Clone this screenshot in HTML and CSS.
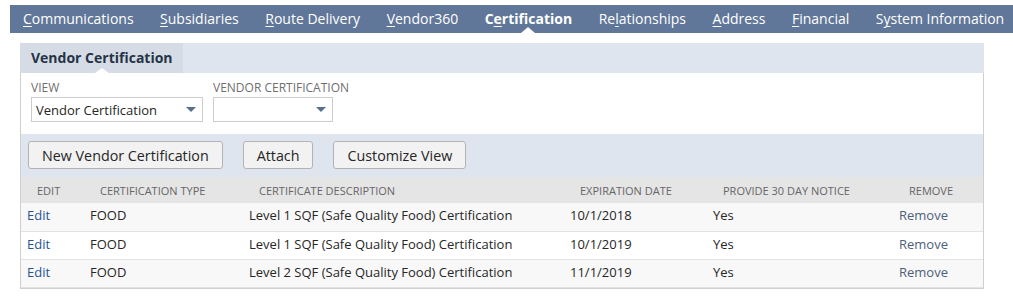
FILE: index.html
```html
<!DOCTYPE html>
<html>
<head>
<meta charset="utf-8">
<link rel="stylesheet" href="styles.css">
</head>
<body>
<nav class="tabs">
  <span class="tab"><u>C</u>ommunications</span>
  <span class="tab"><u>S</u>ubsidiaries</span>
  <span class="tab"><u>R</u>oute Delivery</span>
  <span class="tab"><u>V</u>endor360</span>
  <span class="tab active">C<u>e</u>rtification</span>
  <span class="tab">Re<u>l</u>ationships</span>
  <span class="tab"><u>A</u>ddress</span>
  <span class="tab"><u>F</u>inancial</span>
  <span class="tab">S<u>y</u>stem Information</span>
</nav>
<section class="panel">
  <header class="panel-head">
    <div class="panel-tab">Vendor Certification</div>
  </header>
  <div class="panel-body">
    <div class="filters">
      <div class="field">
        <div class="label">View</div>
        <div class="select wide"><span>Vendor Certification</span><i class="caret"></i></div>
      </div>
      <div class="field">
        <div class="label">Vendor Certification</div>
        <div class="select narrow"><span></span><i class="caret"></i></div>
      </div>
    </div>
    <div class="buttons">
      <button class="btn">New Vendor Certification</button>
      <button class="btn">Attach</button>
      <button class="btn">Customize View</button>
    </div>
    <table class="list">
      <colgroup>
        <col class="c1"><col class="c2"><col class="c3"><col class="c4"><col class="c5"><col class="c6">
      </colgroup>
      <thead>
        <tr><th>Edit</th><th>Certification Type</th><th>Certificate Description</th><th>Expiration Date</th><th>Provide 30 Day Notice</th><th>Remove</th></tr>
      </thead>
      <tbody>
        <tr><td><a class="edit">Edit</a></td><td>FOOD</td><td>Level 1 SQF (Safe Quality Food) Certification</td><td>10/1/2018</td><td>Yes</td><td><a class="remove">Remove</a></td></tr>
        <tr><td><a class="edit">Edit</a></td><td>FOOD</td><td>Level 1 SQF (Safe Quality Food) Certification</td><td>10/1/2019</td><td>Yes</td><td><a class="remove">Remove</a></td></tr>
        <tr><td><a class="edit">Edit</a></td><td>FOOD</td><td>Level 2 SQF (Safe Quality Food) Certification</td><td>11/1/2019</td><td>Yes</td><td><a class="remove">Remove</a></td></tr>
      </tbody>
    </table>
  </div>
</section>
</body>
</html>
```
FILE: styles.css
```css
* { box-sizing: border-box; }
body {
  margin: 0;
  background: #fff;
  font-family: "Open Sans", "Noto Sans", sans-serif;
  color: #262626;
}
.tabs {
  margin: 5px 0 0 10px;
  height: 28px;
  background: #607799;
  display: flex;
  align-items: center;
}
.tab {
  position: relative;
  padding: 0 13.25px;
  font-size: 14px;
  line-height: 28px;
  color: #fff;
  white-space: nowrap;
}
.tab:first-child { padding-left: 13px; }
.tab u { text-decoration-thickness: 1px; text-underline-offset: 2px; }
.tab.active { font-weight: 700; }
.tab.active::after {
  content: "";
  position: absolute;
  left: 50%;
  bottom: 0;
  margin-left: -7px;
  border-left: 7px solid transparent;
  border-right: 7px solid transparent;
  border-bottom: 6px solid #fff;
}
.panel {
  margin: 10px 29px 0 20px;
}
.panel-head {
  height: 30px;
  background: #dfe5ee;
}
.panel-tab {
  position: relative;
  width: 163px;
  height: 30px;
  background: #d6dce5;
  padding-left: 11px;
  font-size: 14px;
  font-weight: 700;
  line-height: 30px;
  color: #253447;
}
.panel-tab::after {
  content: "";
  position: absolute;
  left: 50%;
  bottom: 0;
  margin-left: -7px;
  border-left: 7px solid transparent;
  border-right: 7px solid transparent;
  border-bottom: 5px solid #fff;
}
.panel-body {
  border-left: 1px solid #cfcfcf;
  border-right: 1px solid #cfcfcf;
  border-bottom: 1px solid #cfcfcf;
}
.filters {
  display: flex;
  gap: 10px;
  padding: 7px 10px 12px 10px;
}
.label {
  font-size: 12px;
  line-height: 16px;
  color: #6f6f6f;
  text-transform: uppercase;
  margin-bottom: 1px;
}
.select {
  height: 25px;
  border: 1px solid #cccccc;
  display: flex;
  align-items: center;
  justify-content: space-between;
  padding: 0 6px 0 4px;
  font-size: 13px;
  color: #262626;
}
.select.wide { width: 172px; }
.select.narrow { width: 120px; }
.caret {
  width: 0;
  height: 0;
  border-left: 5.5px solid transparent;
  border-right: 5.5px solid transparent;
  border-top: 5.5px solid #56718f;
}
.buttons {
  background: #dfe5ee;
  padding: 7px 7px 8px 7px;
  display: flex;
  gap: 20px;
}
.btn {
  height: 28px;
  padding: 0 13px;
  font-family: "Open Sans", "Noto Sans", sans-serif;
  font-size: 14.3px;
  color: #262626;
  background: #f2f2f2;
  border: 1px solid #b3b3b3;
  border-radius: 3px;
}
.list {
  width: 100%;
  border-collapse: collapse;
  table-layout: fixed;
  font-size: 13px;
}
.c1 { width: 63px; }
.c2 { width: 159px; }
.c3 { width: 321px; }
.c4 { width: 143px; }
.c5 { width: 186px; }
.c6 { width: auto; }
.list th {
  height: 26px;
  background: #e5e5e5;
  padding: 0 0 0 16px;
  text-align: left;
  font-weight: 400;
  font-size: 11px;
  color: #666;
  text-transform: uppercase;
  white-space: nowrap;
}
.list td {
  height: 28px;
  padding: 3px 0 0 6px;
  line-height: 18px;
  vertical-align: top;
  border-bottom: 1px solid #e3e3e3;
  white-space: nowrap;
}
.list tbody tr:nth-child(odd) td { background: #f8f8f8; }
.edit { color: #255599; }
.remove { color: #4d5f79; }
```
